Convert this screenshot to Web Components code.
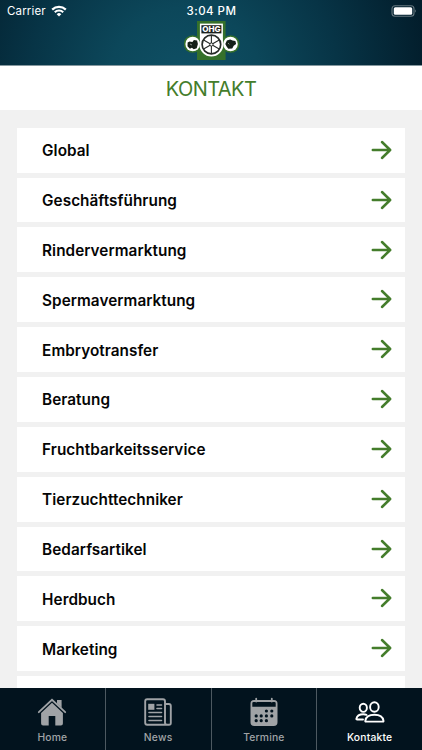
<!DOCTYPE html>
<html lang="de">
<head>
<meta charset="UTF-8">
<meta name="viewport" content="width=device-width, initial-scale=1.0">
<title>Kontakt</title>
<style>
  body {
    margin: 0;
    font-family: Inter, "Liberation Sans", sans-serif;
    background: #f1f1f1;
  }
</style>
</head>
<body>
<contact-app></contact-app>

<script>
class AppHeader extends HTMLElement {
  connectedCallback() {
    this.attachShadow({ mode: 'open' });
    this.shadowRoot.innerHTML = `
      <style>
        :host {
          display: flex;
          flex-direction: column;
          flex: none;
          box-sizing: border-box;
          height: 66px;
          border-bottom: 1px solid #85989f;
          color: #fff;
          background: radial-gradient(ellipse 250px 240px at 184px 80px, #0f5065 0%, #0c475a 30%, #073446 62%, #021c2a 100%);
        }

        .status {
          display: grid;
          grid-template-columns: 1fr auto 1fr;
          align-items: center;
          height: 22px;
          padding: 0 6px 0 7px;
          font-size: 11.5px;
          line-height: 22px;
        }

        .carrier {
          display: flex;
          align-items: center;
          gap: 5px;
          letter-spacing: 0.15px;
        }

        .time {
          font-weight: 550;
          font-size: 11.5px;
          letter-spacing: 0.45px;
        }

        .battery {
          justify-self: end;
          margin: -1px -1px 0 0;
        }

        .logo {
          align-self: center;
          margin: -2px 0 0 1px;
        }

        svg {
          display: block;
        }
      </style>

      <div class="status">
        <div class="carrier">
          <span>Carrier</span>
          <svg width="16" height="12" viewBox="0 0 16 12" fill="none" stroke="#fff" stroke-width="2.2">
            <path d="M1.2 4.6a9.8 9.8 0 0 1 13.6 0"/>
            <path d="M3.8 7.2a6.1 6.1 0 0 1 8.4 0"/>
            <path d="M8 11.5 5.7 9.2a3.3 3.3 0 0 1 4.6 0z" fill="#fff" stroke="none"/>
          </svg>
        </div>
        <span class="time">3:04 PM</span>
        <svg class="battery" width="26" height="12" viewBox="0 0 26 12">
          <rect x="1" y="0.7" width="22" height="10.6" rx="3" fill="none" stroke="#66777f" stroke-width="1.1"/>
          <rect x="2.8" y="2.2" width="18.4" height="7.6" rx="1.5" fill="#fff"/>
          <path d="M24.2 4.2q1.5 1.8 0 3.6z" fill="#7d8b91"/>
        </svg>
      </div>

      <svg class="logo" width="56" height="41" viewBox="0 0 56 41">
        <circle cx="8.5" cy="24" r="8.8" fill="#35702b"/>
        <circle cx="46.7" cy="24" r="8.8" fill="#35702b"/>
        <rect x="13" y="1" width="28.6" height="39" fill="#35702b"/>
        <circle cx="8.7" cy="24" r="7.3" fill="#fff"/>
        <circle cx="46.5" cy="24" r="7.3" fill="#fff"/>
        <path d="M3.6 22.5l2-1 2.8.4 1.5-2 3.2.7.8 3.5-1.2 4.2-3 1-1.8-1.6-2 1-2.4-2.4z" fill="#142018"/>
        <path d="M41.3 24l1.6-3.5 3.2-.9 2.5.9 2.8.4.7 3.2-2.4 1.6-1.5 2.8-3.9.3-1.7-2.2z" fill="#142018"/>
        <path d="M6 24l2 1M44 23l1.3 1.4" stroke="#9eaaa0" stroke-width=".8"/>
        <circle cx="27.4" cy="24.5" r="12" fill="#fff"/>
        <rect x="15.9" y="3.6" width="23" height="20" fill="#fff"/>
        <rect x="17.4" y="5.2" width="20" height="8.2" fill="#1b211d"/>
        <text x="27.4" y="12" text-anchor="middle" textLength="18.4" lengthAdjust="spacingAndGlyphs" font-family="Inter, sans-serif" font-size="7.6" font-weight="800" fill="#fff">OHG</text>
        <g fill="none" stroke="#262b28">
          <circle cx="27.4" cy="24.5" r="9.3" stroke-width="1.7"/>
          <path d="M27.4 15.5v18M19.6 20l15.6 9M35.2 20l-15.6 9" stroke-width="1.1"/>
          <circle cx="27.4" cy="24.5" r="1.6" fill="#fff"/>
        </g>
      </svg>
    `;
  }
}

class PageTitle extends HTMLElement {
  connectedCallback() {
    this.attachShadow({ mode: 'open' });
    this.shadowRoot.innerHTML = `
      <style>
        :host {
          display: block;
          flex: none;
          height: 44px;
          background: #fff;
          color: #447d2b;
          text-align: center;
        }

        h1 {
          margin: 0;
          font-size: 20px;
          font-weight: 400;
          line-height: 46px;
          letter-spacing: -0.55px;
        }
      </style>
      <h1><slot></slot></h1>
    `;
  }
}

class ContactRow extends HTMLElement {
  connectedCallback() {
    this.attachShadow({ mode: 'open' });
    this.shadowRoot.innerHTML = `
      <style>
        :host {
          display: flex;
          flex: none;
          align-items: center;
          justify-content: space-between;
          box-sizing: border-box;
          height: 44.85px;
          padding: 0 13px 0 25.4px;
          background: #fff;
          color: #050505;
          font-size: 15.3px;
          font-weight: 640;
          letter-spacing: 0.05px;
        }

        span {
          margin-top: 1.1px;
        }

        svg {
          display: block;
          margin-top: -0.8px;
        }
      </style>
      <span><slot></slot></span>
      <svg width="21" height="20" viewBox="0 0 21 20" fill="none" stroke="#447d2b" stroke-width="2.5" stroke-linecap="round" stroke-linejoin="round">
        <path d="M1.8 10h17.4M11 2l8.2 8-8.2 8"/>
      </svg>
    `;
  }
}

class TabItem extends HTMLElement {
  connectedCallback() {
    this.attachShadow({ mode: 'open' });
    this.shadowRoot.innerHTML = `
      <style>
        :host {
          display: flex;
          flex: 1;
          flex-direction: column;
          align-items: center;
          box-sizing: border-box;
          padding-top: 9px;
          border-right: 1px solid #4d5961;
          color: #a0a3a6;
          font-size: 10.3px;
          font-weight: 500;
          letter-spacing: 0.2px;
        }

        :host(:last-child) {
          border-right: 0;
        }

        :host([active]) {
          color: #fff;
        }

        span {
          margin-top: 2px;
          line-height: 16px;
        }
      </style>
      <slot name="icon"></slot>
      <span><slot></slot></span>
    `;
  }
}

class TabBar extends HTMLElement {
  connectedCallback() {
    this.attachShadow({ mode: 'open' });
    this.shadowRoot.innerHTML = `
      <style>
        :host {
          display: flex;
          flex: none;
          height: 62px;
          background: #02131e;
        }

        svg {
          display: block;
        }
      </style>

      <tab-item>
        <svg slot="icon" width="30" height="30" viewBox="0 0 30 30" fill="currentColor">
          <path d="M20 3h4.6v8L20 6.5z"/>
          <path d="M1.8 15.2 15 2.8l13.2 12.4" fill="none" stroke="currentColor" stroke-width="1.8" stroke-linecap="round"/>
          <path d="M4.1 16 15 5.8 25.9 16v10.5q0 2-2 2h-5.6V19h-6.6v9.5H6.1q-2 0-2-2z"/>
        </svg>
        Home
      </tab-item>

      <tab-item>
        <svg slot="icon" width="30" height="30" viewBox="0 0 30 30" fill="none" stroke="currentColor" stroke-width="1.9" stroke-linecap="round">
          <path d="M22 25.8V4.2q0-2-2-2H4.2q-2 0-2 2v21.6q0 2 2 2H26q1.8 0 1.8-1.8V9q0-2-2-2H22M22 25.8q.1 2 2 2"/>
          <path d="M14 8h4.5M14 11.5h4.5M6 15.5h12.5M6 19.5h12.5M6 23.5h12.5" stroke-width="1.6"/>
          <rect x="5.2" y="6.8" width="6.2" height="6" fill="currentColor" stroke="none"/>
        </svg>
        News
      </tab-item>

      <tab-item>
        <svg slot="icon" width="30" height="30" viewBox="0 0 30 30" fill="currentColor">
          <path fill-rule="evenodd" d="M5 3h20q3.5 0 3.5 3.5v18.7q0 3.8-3.8 3.8H5.3q-3.8 0-3.8-3.8V6.5Q1.5 3 5 3zM4.5 5q-1.2 0-1.2 1.2v3.5h23.4V6.2Q26.7 5 25.5 5z"/>
          <path d="M7.2 1.6v3M22.8 1.6v3" stroke="currentColor" stroke-width="1.8" stroke-linecap="round"/>
          <g fill="#02131e">
            <circle cx="17.4" cy="14" r="1.6"/><circle cx="22.8" cy="14" r="1.6"/>
            <circle cx="7.2" cy="18.9" r="1.6"/><circle cx="12.2" cy="18.9" r="1.6"/><circle cx="17.4" cy="18.9" r="1.6"/><circle cx="22.8" cy="18.9" r="1.6"/>
            <circle cx="7.2" cy="23.7" r="1.6"/><circle cx="12.2" cy="23.7" r="1.6"/><circle cx="17.4" cy="23.7" r="1.6"/>
          </g>
        </svg>
        Termine
      </tab-item>

      <tab-item active>
        <svg slot="icon" width="30" height="30" viewBox="0 0 30 30" fill="none" stroke="currentColor" stroke-width="1.9" stroke-linecap="round" stroke-linejoin="round">
          <ellipse cx="19.4" cy="10" rx="4.3" ry="4.8"/>
          <ellipse cx="8.3" cy="10.8" rx="3.6" ry="4.1"/>
          <path d="M10.8 24.6q-.6 0-.5-.8.9-6 9.1-6t9.1 6q.1.8-.5.8z"/>
          <path d="M8 22.5H2.1q-.8 0-.7-.7.9-4.5 6.9-4.5 2 0 3.2.5"/>
        </svg>
        Kontakte
      </tab-item>
    `;
  }
}

class ContactApp extends HTMLElement {
  connectedCallback() {
    const rows = [
      'Global', 'Geschäftsführung', 'Rindervermarktung', 'Spermavermarktung',
      'Embryotransfer', 'Beratung', 'Fruchtbarkeitsservice', 'Tierzuchttechniker',
      'Bedarfsartikel', 'Herdbuch', 'Marketing', ''
    ];

    this.attachShadow({ mode: 'open' });
    this.shadowRoot.innerHTML = `
      <style>
        :host {
          display: flex;
          flex-direction: column;
          width: 100%;
          height: 750px;
          overflow: hidden;
        }

        main {
          display: flex;
          flex: 1;
          flex-direction: column;
          gap: 5px;
          min-height: 0;
          overflow: hidden;
          padding: 17.8px 16.7px 0;
        }
      </style>
      <app-header></app-header>
      <page-title>KONTAKT</page-title>
      <main>
        ${rows.map(name => `<contact-row>${name}</contact-row>`).join('')}
      </main>
      <tab-bar></tab-bar>
    `;
  }
}

customElements.define('app-header', AppHeader);
customElements.define('page-title', PageTitle);
customElements.define('contact-row', ContactRow);
customElements.define('tab-item', TabItem);
customElements.define('tab-bar', TabBar);
customElements.define('contact-app', ContactApp);
</script>
</body>
</html>
